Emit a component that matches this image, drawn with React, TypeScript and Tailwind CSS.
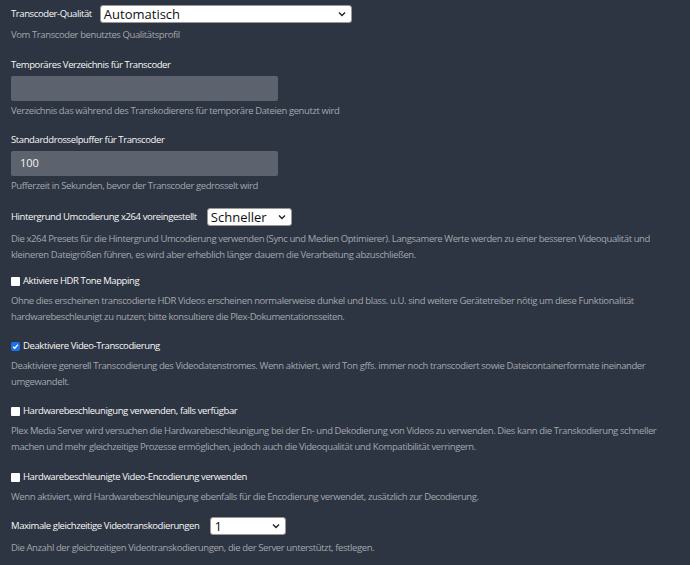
import React from "react";

const Chevron = () => (
  <svg width="8" height="6" viewBox="0 0 8 6" className="shrink-0">
    <path d="M1 1.5 L4 4.5 L7 1.5" fill="none" stroke="#222" strokeWidth="1.4" />
  </svg>
);

const T = "text-[9.5px] tracking-[-0.4px]";
const L = "text-[9.5px] tracking-[-0.4px] font-medium text-[#f7f7f7]";

function Select({ value, w }: { value: string; w: string }) {
  return (
    <div className={`flex h-[18px] items-center justify-between rounded-[3px] border border-[#999] bg-white pl-[3px] pr-[5px] ${w}`}>
      <span className="text-[13px] leading-none text-[#111]">{value}</span>
      <Chevron />
    </div>
  );
}

function Help({ children }: { children: React.ReactNode }) {
  return <p className={`${T} leading-[16px] text-[#a1a6ae]`}>{children}</p>;
}

function Check({ checked, label }: { checked?: boolean; label: string }) {
  return (
    <div className={`flex items-center gap-[3px] ${L} leading-[16px]`}>
      {checked ? (
        <div className="flex h-[9px] w-[9px] items-center justify-center rounded-[2px] bg-[#1a73e8]">
          <svg width="7" height="7" viewBox="0 0 8 8">
            <path d="M1.2 4.2 L3.2 6 L6.8 1.8" fill="none" stroke="white" strokeWidth="1.5" />
          </svg>
        </div>
      ) : (
        <div className="h-[9px] w-[9px] rounded-[1px] bg-white" />
      )}
      <span>{label}</span>
    </div>
  );
}

export default function App() {
  return (
    <div
      className="h-[565px] w-[690px] overflow-hidden bg-[#2e3542] px-[11px] pt-[5px]"
      style={{ fontFamily: "'Open Sans', sans-serif" }}
    >
      <div className="flex items-center gap-[8px]">
        <span className={L}>Transcoder-Qualität</span>
        <Select value="Automatisch" w="w-[252px]" />
      </div>
      <div className="mt-[4px]"><Help>Vom Transcoder benutztes Qualitätsprofil</Help></div>

      <div className={`mt-[14px] ${L} leading-[16px]`}>Temporäres Verzeichnis für Transcoder</div>
      <div className="mt-[3px] h-[25px] w-[267px] rounded-[2px] bg-[#5d636e]" />
      <div className="mt-[2px]"><Help>Verzeichnis das während des Transkodierens für temporäre Dateien genutzt wird</Help></div>

      <div className={`mt-[13px] ${L} leading-[16px]`}>Standarddrosselpuffer für Transcoder</div>
      <div className="mt-[3px] flex h-[25px] w-[267px] items-center rounded-[2px] bg-[#5d636e] pl-[9px] text-[11px] text-[#f4f4f4]">100</div>
      <div className="mt-[2px]"><Help>Pufferzeit in Sekunden, bevor der Transcoder gedrosselt wird</Help></div>

      <div className="mt-[14px] flex items-center gap-[10px]">
        <span className={L}>Hintergrund Umcodierung x264 voreingestellt</span>
        <Select value="Schneller" w="w-[85px]" />
      </div>
      <div className="mt-[5px]">
        <Help>
          Die x264 Presets für die Hintergrund Umcodierung verwenden (Sync und Medien Optimierer). Langsamere Werte werden zu einer besseren Videoqualität und kleineren Dateigrößen führen, es wird aber erheblich länger dauern die Verarbeitung abzuschließen.
        </Help>
      </div>

      <div className="mt-[10px]"><Check label="Aktiviere HDR Tone Mapping" /></div>
      <div className="mt-[4px]">
        <Help>
          Ohne dies erscheinen transcodierte HDR Videos erscheinen normalerweise dunkel und blass. u.U. sind weitere Gerätetreiber nötig um diese Funktionalität hardwarebeschleunigt zu nutzen; bitte konsultiere die Plex-Dokumentationsseiten.
        </Help>
      </div>

      <div className="mt-[13px]"><Check checked label="Deaktiviere Video-Transcodierung" /></div>
      <div className="mt-[4px]">
        <Help>
          Deaktiviere generell Transcodierung des Videodatenstromes. Wenn aktiviert, wird Ton gffs. immer noch transcodiert sowie Dateicontainerformate ineinander umgewandelt.
        </Help>
      </div>

      <div className="mt-[13px]"><Check label="Hardwarebeschleunigung verwenden, falls verfügbar" /></div>
      <div className="mt-[4px]">
        <Help>
          Plex Media Server wird versuchen die Hardwarebeschleunigung bei der En- und Dekodierung von Videos zu verwenden. Dies kann die Transkodierung schneller machen und mehr gleichzeitige Prozesse ermöglichen, jedoch auch die Videoqualität und Kompatibilität verringern.
        </Help>
      </div>

      <div className="mt-[14px]"><Check label="Hardwarebeschleunigte Video-Encodierung verwenden" /></div>
      <div className="mt-[4px]"><Help>Wenn aktiviert, wird Hardwarebeschleunigung ebenfalls für die Encodierung verwendet, zusätzlich zur Decodierung.</Help></div>

      <div className="mt-[12px] flex items-center gap-[11px]">
        <span className={L}>Maximale gleichzeitige Videotranskodierungen</span>
        <Select value="1" w="w-[76px]" />
      </div>
      <div className="mt-[5px]"><Help>Die Anzahl der gleichzeitigen Videotranskodierungen, die der Server unterstützt, festlegen.</Help></div>
    </div>
  );
}
